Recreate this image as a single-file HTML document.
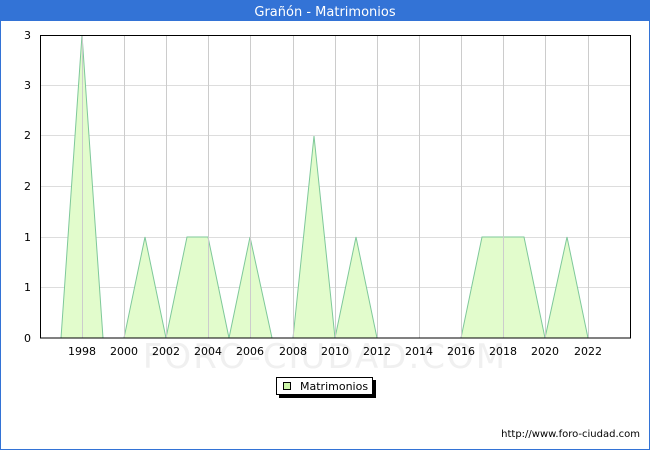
<!DOCTYPE html>
<html><head><meta charset="utf-8"><style>
body{margin:0;width:650px;height:450px;overflow:hidden;background:#fff;font-family:"DejaVu Sans","Liberation Sans",sans-serif}
</style></head><body>
<svg width="650" height="450" xmlns="http://www.w3.org/2000/svg" font-family="DejaVu Sans, Liberation Sans, sans-serif">
<rect x="0.5" y="0.5" width="649" height="449" fill="#fff" stroke="#3373d6"/>
<rect x="0" y="0" width="650" height="21" fill="#3373d6"/>
<text x="325" y="16" fill="#fff" font-size="13" text-anchor="middle">Grañón - Matrimonios</text>
<text x="325" y="368" fill="#f0f0f0" font-size="34" text-anchor="middle" letter-spacing="2">FORO-CIUDAD.COM</text>
<g stroke="#dddddd" stroke-width="1">
<line x1="40" x2="630" y1="85.5" y2="85.5"/><line x1="40" x2="630" y1="135.5" y2="135.5"/><line x1="40" x2="630" y1="186.5" y2="186.5"/><line x1="40" x2="630" y1="237.5" y2="237.5"/><line x1="40" x2="630" y1="287.5" y2="287.5"/>
</g>
<polygon fill="#e2fccc" stroke="#7ec89a" stroke-width="1" points="61,338 82,35 103,338 124,338 145,237 166,338 187,237 208,237 229,338 250,237 272,338 293,338 314,136 335,338 356,237 377,338 461,338 482,237 503,237 524,237 545,338 567,237 588,338"/>
<g stroke="#cccccc" stroke-width="1">
<line x1="82.5" x2="82.5" y1="36" y2="338"/><line x1="124.5" x2="124.5" y1="36" y2="338"/><line x1="166.5" x2="166.5" y1="36" y2="338"/><line x1="208.5" x2="208.5" y1="36" y2="338"/><line x1="250.5" x2="250.5" y1="36" y2="338"/><line x1="293.5" x2="293.5" y1="36" y2="338"/><line x1="335.5" x2="335.5" y1="36" y2="338"/><line x1="377.5" x2="377.5" y1="36" y2="338"/><line x1="419.5" x2="419.5" y1="36" y2="338"/><line x1="461.5" x2="461.5" y1="36" y2="338"/><line x1="503.5" x2="503.5" y1="36" y2="338"/><line x1="545.5" x2="545.5" y1="36" y2="338"/><line x1="588.5" x2="588.5" y1="36" y2="338"/>
</g>
<rect x="40.5" y="35.5" width="590" height="302.5" fill="none" stroke="#000"/>
<g font-size="11" fill="#000" text-anchor="end">
<text x="31" y="39">3</text><text x="31" y="89">3</text><text x="31" y="139">2</text><text x="31" y="190">2</text><text x="31" y="241">1</text><text x="31" y="291">1</text><text x="31" y="342">0</text>
</g>
<g font-size="11" fill="#000" text-anchor="middle">
<text x="82" y="355">1998</text><text x="124" y="355">2000</text><text x="166" y="355">2002</text><text x="208" y="355">2004</text><text x="250" y="355">2006</text><text x="293" y="355">2008</text><text x="335" y="355">2010</text><text x="377" y="355">2012</text><text x="419" y="355">2014</text><text x="461" y="355">2016</text><text x="503" y="355">2018</text><text x="545" y="355">2020</text><text x="588" y="355">2022</text>
</g>
<rect x="279" y="380" width="97" height="18" fill="#000"/>
<rect x="276.5" y="377.5" width="96" height="17" fill="#fff" stroke="#000"/>
<rect x="283.5" y="382.5" width="7" height="7" fill="#ccf5a8" stroke="#000"/>
<text x="300" y="390" font-size="11" fill="#000">Matrimonios</text>
<text x="640" y="437" font-size="10" fill="#000" text-anchor="end">http://www.foro-ciudad.com</text>
</svg>
</body></html>
